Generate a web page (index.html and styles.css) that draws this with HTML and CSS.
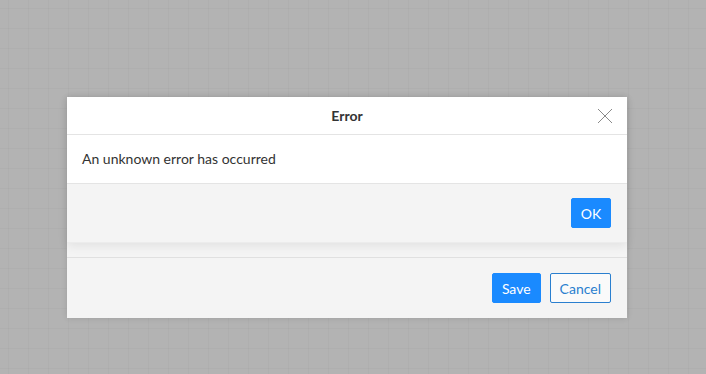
FILE: index.html
```html
<!DOCTYPE html>
<html lang="en">
  <head>
    <meta charset="UTF-8" />
    <meta name="viewport" content="width=device-width, initial-scale=1.0" />
    <title>Error</title>
    <link rel="stylesheet" href="styles.css">
  </head>
  <body>
    <div class="canvas">
      <div class="dialog">
        <div class="dialog-spacer"></div>
        <div class="dialog-footer">
          <button class="btn btn-primary">Save</button>
          <button class="btn btn-outline">Cancel</button>
        </div>

        <!-- error popup sits over the editor dialog -->
        <div class="alert">
          <div class="alert-header">
            <span class="alert-title">Error</span>
            <button class="close" aria-label="Close">
              <svg width="16" height="16" viewBox="0 0 16 16">
                <path d="M1 1 L15 15 M15 1 L1 15" stroke="#8a8a8a" stroke-width="1" fill="none" />
              </svg>
            </button>
          </div>
          <div class="alert-body">An unknown error has occurred</div>
          <div class="alert-footer">
            <button class="btn btn-primary btn-ok">OK</button>
          </div>
        </div>
      </div>
    </div>
  </body>
</html>
```

FILE: styles.css
```css
html,
body {
  margin: 0;
  height: 100%;
}
body {
  font-family: Lato, "Open Sans", sans-serif;
  font-size: 14px;
  color: #333;
  background-color: #b3b3b3;
  background-image:
    linear-gradient(to right, rgba(0, 0, 0, 0.022) 1px, transparent 1px),
    linear-gradient(to bottom, rgba(0, 0, 0, 0.022) 1px, transparent 1px);
  background-size: 20px 20px;
  background-position: 8px 8px;
}
.canvas {
  padding: 97px 0 0 67px;
}
.dialog {
  position: relative;
  width: 560px;
  background: #f4f4f4;
  box-shadow: 0 0 6px rgba(0, 0, 0, 0.12);
}
.dialog-spacer {
  height: 160px;
}
.dialog-footer {
  display: flex;
  justify-content: flex-end;
  align-items: center;
  gap: 9px;
  height: 60px;
  padding: 0 16px;
  border-top: 1px solid #e0e0e0;
}
.alert {
  position: absolute;
  top: 0;
  left: 0;
  right: 0;
  background: #fff;
  box-shadow: 0 3px 10px rgba(0, 0, 0, 0.08);
}
.alert-header {
  position: relative;
  height: 37px;
  display: flex;
  align-items: center;
  justify-content: center;
  border-bottom: 1px solid #e4e4e4;
}
.alert-title {
  font-weight: 700;
  font-size: 14px;
  color: #333;
}
.close {
  position: absolute;
  right: 14px;
  top: 11px;
  padding: 0;
  border: 0;
  background: none;
  line-height: 0;
}
.alert-body {
  height: 47px;
  display: flex;
  align-items: center;
  padding: 0 15px 1px;
  border-bottom: 1px solid #e4e4e4;
}
.alert-footer {
  height: 58px;
  display: flex;
  justify-content: flex-end;
  align-items: center;
  padding: 0 16px;
  background: #f4f4f4;
  border-bottom: 1px solid #ececec;
}
.btn {
  height: 30px;
  padding: 0 9px;
  font-family: inherit;
  font-size: 14px;
  border-radius: 2px;
  cursor: pointer;
}
.btn-primary {
  background: #1a8aff;
  border: 1px solid #1a8aff;
  color: #fff;
}
.btn-outline {
  background: #fafafa;
  border: 1px solid #2a7fcf;
  color: #2a7fcf;
}
.btn-ok {
  width: 40px;
  padding: 0;
}
```
